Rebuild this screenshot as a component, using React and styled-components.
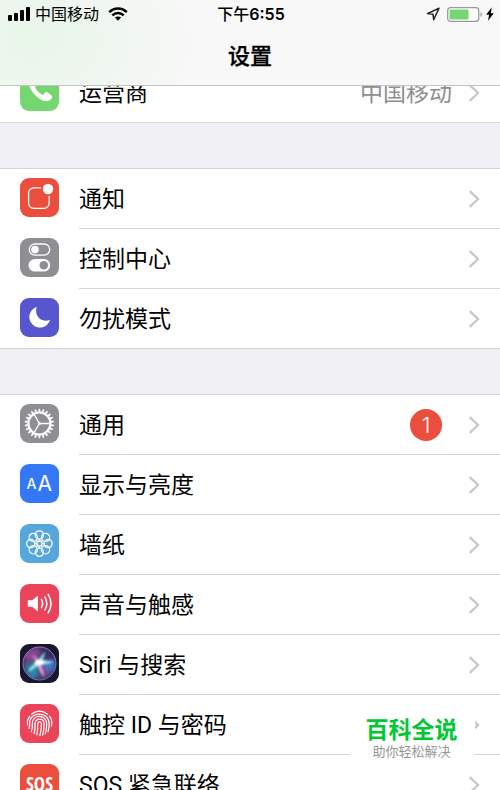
import React from "react";
import styled, { createGlobalStyle } from "styled-components";

const GlobalStyle = createGlobalStyle`
  * { box-sizing: border-box; }
  body {
    margin: 0;
    background: #efeff4;
    color: #000;
    font-family: Inter, "Noto Sans CJK SC", sans-serif;
  }
`;

const Screen = styled.div`
  position: relative;
  height: 100vh;
  overflow: hidden;
`;

const Header = styled.header`
  position: sticky;
  top: 0;
  z-index: 1;
  height: 86px;
  border-bottom: 1px solid #c3c3c6;
  background:
    radial-gradient(ellipse 170px 120px at 36px 40px, #e8f6e9, #eff6ef 45%, rgba(247, 247, 247, 0)),
    #f8f8f8;
`;

const StatusBar = styled.div`
  display: grid;
  grid-template-columns: 1fr auto 1fr;
  align-items: center;
  height: 28px;
  padding: 0 6px 0 8px;
  font-size: 16px;
  line-height: 24px;
`;

const StatusGroup = styled.div`
  display: flex;
  align-items: center;
  justify-content: ${(p) => (p.$end ? "flex-end" : "flex-start")};
  gap: ${(p) => (p.$end ? "3px" : "5px")};

  svg { display: block; flex: none; }
  svg:last-child { margin-left: ${(p) => (p.$end ? "0" : "4px")}; }
  svg:first-child { margin-right: ${(p) => (p.$end ? "4px" : "0")}; }
`;

const Time = styled.time`
  font-weight: 500;

  b { font-weight: 600; }
`;

const Title = styled.h1`
  margin: 12px 0 0;
  font-size: 22px;
  line-height: 32px;
  font-weight: 500;
  -webkit-text-stroke: 0.3px;
  text-align: center;
`;

const Content = styled.main`
  display: flex;
  flex-direction: column;
  gap: 45px;
  margin-top: -24px;
`;

const Group = styled.ul`
  margin: 0;
  padding: 0;
  list-style: none;
  background: #fff;
  border-top: 1px solid #d3d3d7;
`;

const Body = styled.span`
  flex: 1;
  display: flex;
  align-items: center;
  min-width: 0;
  height: 60px;
  padding-right: 20px;
  border-bottom: 1px solid #d6d6d9;
`;

const Row = styled.a`
  display: flex;
  gap: 20px;
  height: 60px;
  padding-left: 20px;
  color: inherit;
  text-decoration: none;
`;

const Item = styled.li`
  &:last-child ${Row} { border-bottom: 1px solid #d3d3d7; }
  &:last-child ${Body} { height: 59px; border-bottom: 0; }
`;

const Tile = styled.svg`
  flex: none;
  width: 39px;
  height: 39px;
  margin-top: 9px;
  border-radius: 9px;
  background: ${(p) => p.$color};
`;

const Label = styled.span`
  flex: 1;
  padding-top: 2px;
  font-family: Roboto, "Noto Sans CJK SC", sans-serif;
  font-size: 23px;
  line-height: 32px;
  white-space: nowrap;
`;

const Value = styled.span`
  margin-right: 16px;
  color: #8e8e93;
  font-size: 23px;
  line-height: 32px;
`;

const Badge = styled.span`
  display: grid;
  place-items: center;
  width: 32px;
  height: 32px;
  margin-right: 26px;
  border-radius: 50%;
  background: #eb4e3d;
  color: #fff;
  font-size: 22px;
  line-height: 32px;
  font-weight: 300;
`;

const Watermark = styled.aside`
  position: absolute;
  z-index: 2;
  right: 25px;
  bottom: 24px;
  width: 125px;
  padding: 6px 2px 6px 0;
  background: #fff;
  text-align: center;
  white-space: nowrap;
`;

const Brand = styled.div`
  color: #00c832;
  font-size: 23px;
  line-height: 24px;
  font-weight: 700;
`;

const Slogan = styled.div`
  color: #969696;
  font-size: 13px;
  line-height: 18px;
`;

const Chevron = () => (
  <svg width="12" height="18" viewBox="0 0 12 18" fill="none" stroke="#c7c7cc" strokeWidth="2.3" aria-hidden="true">
    <path d="M1.7 1.2 10 9l-8.3 7.8" />
  </svg>
);

const PhoneIcon = () => (
  <Tile $color="#76d672" viewBox="0 0 39 39" fill="#fff">
    <path d="M12.2 6.1c-1.7 1.4-3.1 3-3.2 5 0 3.8 2.1 7.5 5 10.8 3.3 3.7 7.5 6.700 12.300 7.200 2.400.2 4.200-1.100 5.500-3 .8-.9.6-2.100-.4-2.900l-4-2.700c-1-.7-2-.5-2.700.4l-1 1.400c-.5.6-1.200.8-1.900.3-2.500-1.500-4.900-3.900-6.400-6.300-.4-.7-.4-1.300.3-1.800l1.400-1c.9-.7 1.200-1.800.5-2.800l-2.700-4.200c-.7-1-1.700-1.200-2.700-.4Z" />
  </Tile>
);

const NotificationIcon = () => (
  <Tile $color="#eb4e3d" viewBox="0 0 39 39" fill="none" stroke="#fff" strokeWidth="1.3">
    <path d="M21 9.8h-7.2a5.2 5.2 0 0 0-5.2 5.2v10.2a5.2 5.2 0 0 0 5.2 5.2H24a5.2 5.2 0 0 0 5.2-5.2V18" />
    <circle cx="28" cy="11" r="5.2" fill="#fff" stroke="none" />
  </Tile>
);

const ControlIcon = () => (
  <Tile $color="#8e8e93" viewBox="0 0 39 39" fill="#fff">
    <rect x="9.3" y="6" width="20.4" height="11.2" rx="5.6" fill="none" stroke="#fff" strokeWidth="1.3" />
    <circle cx="15" cy="11.6" r="3.8" />
    <rect x="8.6" y="21" width="21.6" height="12.6" rx="6.3" />
    <circle cx="23.8" cy="27.2" r="4.3" fill="#8e8e93" />
  </Tile>
);

const MoonIcon = () => (
  <Tile $color="#5756ce" viewBox="0 0 39 39" fill="#fff">
    <path d="M16.8 9A10.5 10.5 0 1 0 30 21.7C22.5 25.2 13.6 18.5 16.8 9Z" />
  </Tile>
);

const TEETH = Array.from({ length: 22 }, (_, i) => (i * 360) / 22);

const GearIcon = () => (
  <Tile $color="#8e8e93" viewBox="0 0 39 39" fill="none" stroke="#fff">
    <circle cx="19.4" cy="19.5" r="11" strokeWidth="2.2" />
    {TEETH.map((a) => (
      <path key={a} d="M18.5 8.5 18.9 5h1l.4 3.5Z" fill="#fff" strokeWidth=".5" transform={`rotate(${a} 19.4 19.5)`} />
    ))}
    <path d="M19.4 19.5h10M19.4 19.5l-5.2-9M19.4 19.5l-5.2 9" strokeWidth="1.4" />
    <circle cx="19.4" cy="19.5" r="1.6" fill="#fff" stroke="none" />
  </Tile>
);

const DisplayIcon = () => (
  <Tile $color="#3478f6" viewBox="0 0 39 39" fill="#fff" fontFamily="Inter, sans-serif">
    <text x="6.5" y="25" fontSize="14" fontWeight="500">A</text>
    <text x="17.5" y="27" fontSize="21">A</text>
  </Tile>
);

const PETALS = [0, 45, 90, 135, 180, 225, 270, 315];

const WallpaperIcon = () => (
  <Tile $color="#55a6dc" viewBox="0 0 39 39" fill="none" stroke="#fff" strokeWidth="1.3">
    {PETALS.map((a) => (
      <circle key={a} cx="19.4" cy="10.9" r="4.1" transform={`rotate(${a} 19.4 19.6)`} />
    ))}
    <circle cx="19.4" cy="19.6" r="2.6" />
    {PETALS.map((a) => (
      <path key={a} d="M19.4 17v-2" transform={`rotate(${a} 19.4 19.6)`} />
    ))}
  </Tile>
);

const SoundIcon = () => (
  <Tile $color="#ea445a" viewBox="0 0 39 39" fill="none" stroke="#fff" strokeWidth="1.5" strokeLinecap="round">
    <path d="M7.8 16.2h4.4l5.7-4.4v15.6l-5.7-4.6H7.8Z" fill="#fff" stroke="none" />
    <path d="M21.4 15.4q2.4 4.2 0 8.2M24.8 12.8q4 6.8 0 13.4M28.1 10.3q5.8 9.2 0 18.6" />
  </Tile>
);

const SiriIcon = () => (
  <Tile $color="#17172f" viewBox="0 0 39 39">
    <defs>
      <filter id="siriGlow" x="-50%" y="-50%" width="200%" height="200%">
        <feGaussianBlur stdDeviation="2" />
      </filter>
      <filter id="siriSoft" x="-50%" y="-50%" width="200%" height="200%">
        <feGaussianBlur stdDeviation="0.8" />
      </filter>
      <clipPath id="siriOrb"><circle cx="19.5" cy="19.5" r="16.4" /></clipPath>
      <linearGradient id="siriRing" x1="0" y1="0" x2="1" y2="1">
        <stop offset="0" stopColor="#bd66b2" />
        <stop offset=".5" stopColor="#8d81a8" />
        <stop offset="1" stopColor="#517eab" />
      </linearGradient>
    </defs>
    <g clipPath="url(#siriOrb)">
      <circle cx="19.5" cy="19.5" r="16.4" fill="#39305f" />
      <g filter="url(#siriGlow)">
        <path d="M3 6 20 4l-1 14L5 17Z" fill="#8a4694" />
        <path d="M19 4 32 8 20 18Z" fill="#2c3160" />
        <path d="M20 18 35 15v11l-11 3Z" fill="#3f78c8" />
        <path d="M19 19 4 20l5 15 9-1Z" fill="#2f86b0" />
        <path d="m20 20 1 15 11-5Z" fill="#7a4490" />
      </g>
      <g filter="url(#siriSoft)">
        <path d="M12 11Q18 14 21 19Q15 17 12 11Z" fill="#c8a4e4" />
        <path d="M8 28Q12 18 22 17Q17 24 8 28Z" fill="#86ead9" />
        <path d="M17 16Q26 16 34 18Q26 21 17 20Z" fill="#b4d9f0" />
        <path d="M18 18Q24 25 24 33Q19 27 17 19Z" fill="#f0a8d4" />
        <path d="M18 18Q20 12 25 8Q25 14 20 19Z" fill="#8ad3d6" />
        <ellipse cx="19.5" cy="18.5" rx="5" ry="3" fill="#fff" />
      </g>
    </g>
    <circle cx="19.5" cy="19.5" r="16.5" fill="none" stroke="url(#siriRing)" strokeWidth="1" />
  </Tile>
);

const FingerprintIcon = () => (
  <Tile $color="#ea445a" viewBox="0 0 39 39" fill="none" stroke="#fff" strokeWidth="1.25" strokeLinecap="round">
    <path d="M11.4 10.2Q19.5 4 27.7 10.4" />
    <path d="M7.6 20.8Q6.6 15.7 9.8 12.3M29.6 12.3Q32.8 16.4 31.4 22.2" />
    <path d="M8.9 24.5Q10 22.2 9.6 19.2C9.8 6.9 28.9 7 29.2 19.6Q29.2 24 28 27.6" />
    <path d="M11.3 27.7Q12.8 24 12.3 19.3C12.4 10 26.6 10.2 26.7 19.8Q26.7 25.6 25.3 29.8" />
    <path d="M14.1 29.5Q15.4 24.8 15 19.6C15 13.7 24 13.8 24.1 19.7Q24.2 26 22.6 31.2" />
    <path d="M16.8 30.8Q18.1 25.4 17.7 19.7C17.8 17.2 21.3 17.2 21.4 19.8Q21.5 26.4 19.8 31.7" />
  </Tile>
);

const SosIcon = () => (
  <Tile $color="#eb4e3d" viewBox="0 0 39 39" fill="#fff">
    <text
      x="19.5"
      y="27"
      fontSize="19"
      fontWeight="700"
      textAnchor="middle"
      fontFamily="'Liberation Sans Narrow', 'Open Sans Condensed', Roboto, sans-serif"
    >
      SOS
    </text>
  </Tile>
);

const GROUPS = [
  [{ label: "运营商", icon: PhoneIcon, value: "中国移动" }],
  [
    { label: "通知", icon: NotificationIcon },
    { label: "控制中心", icon: ControlIcon },
    { label: "勿扰模式", icon: MoonIcon },
  ],
  [
    { label: "通用", icon: GearIcon, badge: 1 },
    { label: "显示与亮度", icon: DisplayIcon },
    { label: "墙纸", icon: WallpaperIcon },
    { label: "声音与触感", icon: SoundIcon },
    { label: "Siri 与搜索", icon: SiriIcon },
    { label: "触控 ID 与密码", icon: FingerprintIcon },
    { label: "SOS 紧急联络", icon: SosIcon },
  ],
];

const SettingRow = ({ label, icon: Icon, value, badge }) => (
  <Item>
    <Row href="#">
      <Icon />
      <Body>
        <Label>{label}</Label>
        {value && <Value>{value}</Value>}
        {badge && <Badge>{badge}</Badge>}
        <Chevron />
      </Body>
    </Row>
  </Item>
);

const SignalIcon = () => (
  <svg width="22" height="14" viewBox="0 0 22 14" aria-hidden="true">
    <rect x="0" y="8" width="4" height="6" rx="1" />
    <rect x="6" y="6" width="4" height="8" rx="1" />
    <rect x="12" y="3" width="4" height="11" rx="1" />
    <rect x="18" y="0" width="4" height="14" rx="1" />
  </svg>
);

const WifiIcon = () => (
  <svg width="20" height="14" viewBox="0 0 20 14" fill="none" stroke="#000" strokeWidth="2.5" aria-hidden="true">
    <path d="M1.2 5.2c5-5 12.6-5 17.6 0M4.3 8.4c3.3-3.2 8.1-3.2 11.4 0" />
    <path d="M6.9 10.6c1.8-1.6 4.4-1.6 6.2 0L10 13.8Z" fill="#000" stroke="none" />
  </svg>
);

const LocationIcon = () => (
  <svg width="14" height="14" viewBox="0 0 14 14" fill="none" stroke="#222" strokeWidth="1.5" strokeLinejoin="round" aria-hidden="true">
    <path d="M13 1.2 1.5 6.6l5.5.6.7 5.5Z" />
  </svg>
);

const BatteryIcon = () => (
  <svg width="36" height="15" viewBox="0 0 36 15" aria-hidden="true">
    <rect x=".7" y=".7" width="31" height="13.6" rx="2.8" fill="#fff" stroke="#999" strokeWidth="1.3" />
    <rect x="2.5" y="2.5" width="19" height="10" rx="1" fill="#76d672" />
    <path d="M33.5 5c1.8.7 1.8 4.3 0 5Z" fill="#999" />
  </svg>
);

const BoltIcon = () => (
  <svg width="8" height="14" viewBox="0 0 8 14" aria-hidden="true">
    <path d="M5.8.3.2 7.7h2.9L2 13.7l5.8-7.5H4.7Z" />
  </svg>
);

export default function App() {
  return (
    <Screen>
      <GlobalStyle />
      <Header>
        <StatusBar>
          <StatusGroup>
            <SignalIcon />
            <span>中国移动</span>
            <WifiIcon />
          </StatusGroup>
          <Time>下午<b>6:55</b></Time>
          <StatusGroup $end>
            <LocationIcon />
            <BatteryIcon />
            <BoltIcon />
          </StatusGroup>
        </StatusBar>
        <Title>设置</Title>
      </Header>
      <Content>
        {GROUPS.map((rows) => (
          <Group key={rows[0].label}>
            {rows.map((row) => (
              <SettingRow key={row.label} {...row} />
            ))}
          </Group>
        ))}
      </Content>
      <Watermark>
        <Brand>百科全说</Brand>
        <Slogan>助你轻松解决</Slogan>
      </Watermark>
    </Screen>
  );
}
